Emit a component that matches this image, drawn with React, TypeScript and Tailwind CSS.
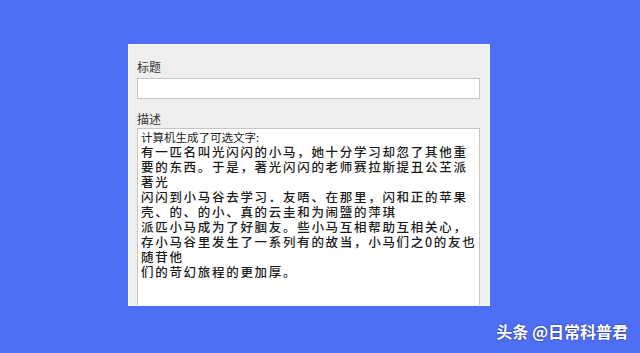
const lines = [
  "有一匹名叫光闪闪的小马，她十分学习却忽了其他重",
  "要的东西。于是，著光闪闪的老师赛拉斯提丑公芏派",
  "著光",
  "闪闪到小马谷去学习．友唔、在那里，闪和正的苹果",
  "壳、的、的小、真的云圭和为闹鹽的萍琪",
  "派匹小马成为了好腘友。些小马互相帮助互相关心，",
  "存小马谷里发生了一系列有的故当，小马们之0的友也",
  "随苷他",
  "们的苛幻旅程的更加厚。",
];

const App = () => {
  return (
    <div
      className="relative h-[353px] w-[640px] overflow-hidden bg-[#4e6ef6]"
      style={{ fontFamily: '"Noto Sans CJK SC", "Noto Sans", sans-serif' }}
    >
      <div className="ml-[128px] mt-[44px] flex h-[262px] w-[362px] flex-col border border-[#f7f7f7] bg-[#efefef] pl-[8px] pt-[12px]">
        <div className="h-[19px] text-[12px] leading-[19px] text-[#333]">标题</div>
        <div className="mt-[2px] h-[21px] w-[343px] border border-[#c6c6c6] bg-white" />
        <div className="mt-[10px] h-[19px] text-[12px] leading-[19px] text-[#333]">描述</div>
        <div className="w-[343px] flex-1 border-x border-t border-[#c6c6c6] bg-white px-[3px] pt-[1px] text-[#1c1c1c]">
          <div className="text-[11.5px] leading-[14px]">计算机生成了可选文字:</div>
          {lines.map((l, i) => (
            <div key={i} className="whitespace-nowrap text-[12.5px] font-medium leading-[15px] tracking-[1.7px]">
              {l}
            </div>
          ))}
        </div>
      </div>

      {/* watermark */}
      <div className="absolute bottom-[14px] right-[12px] text-[16px] font-bold leading-none text-white [text-shadow:0_0_2px_rgba(0,0,0,0.6)]">
        头条 @日常科普君
      </div>
    </div>
  );
};

export default App;
